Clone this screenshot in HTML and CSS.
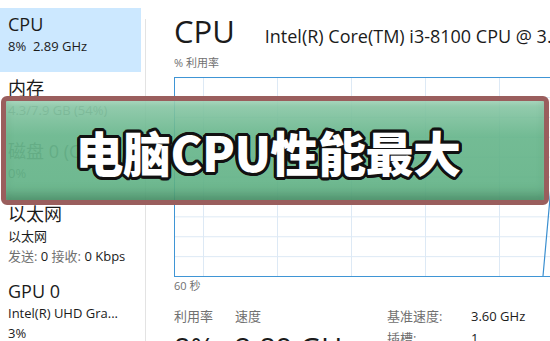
FILE: index.html
```html
<!DOCTYPE html>
<html lang="zh-CN">
<head>
<meta charset="utf-8">
<link rel="stylesheet" href="styles.css">
</head>
<body>
<div class="app">
  <aside class="sidebar">
    <div class="item selected">
      <div class="title">CPU</div>
      <div class="sub">8%&nbsp; 2.89 GHz</div>
    </div>
    <div class="item">
      <div class="title">内存</div>
      <div class="sub muted">4.3/7.9 GB (54%)</div>
    </div>
    <div class="item">
      <div class="title muted">磁盘 0 (C:)</div>
      <div class="sub muted">0%</div>
    </div>
    <div class="item tall">
      <div class="title">以太网</div>
      <div class="sub">以太网</div>
      <div class="sub"><span class="muted">发送:</span> 0 <span class="muted">接收:</span> 0 Kbps</div>
    </div>
    <div class="item tall">
      <div class="title">GPU 0</div>
      <div class="sub">Intel(R) UHD Gra...</div>
      <div class="sub">3%</div>
    </div>
  </aside>
  <div class="divider"></div>
  <main class="main">
    <div class="header">
      <span class="big">CPU</span>
      <span class="model">Intel(R) Core(TM) i3-8100 CPU @ 3.60GHz</span>
    </div>
    <div class="axis">% 利用率</div>
    <div class="graph">
      <svg class="trace" width="400" height="199" viewBox="0 0 400 199">
        <polyline points="368,198 375,120 380,60" fill="none" stroke="#3b8fd0" stroke-width="1.2"/>
      </svg>
    </div>
    <div class="axis time">60 秒</div>
    <div class="stats">
      <div class="stat">
        <div class="label">利用率</div>
        <div class="value">8%</div>
      </div>
      <div class="stat">
        <div class="label">速度</div>
        <div class="value">2.89 GHz</div>
      </div>
      <div class="specs">
        <span class="label">基准速度:</span><span class="spec">3.60 GHz</span>
        <span class="label">插槽:</span><span class="spec">1</span>
      </div>
    </div>
  </main>
</div>
<div class="banner">
  <span class="banner-text">电脑CPU性能最大</span>
</div>
</body>
</html>
```
FILE: styles.css
```css
html, body {
  margin: 0;
  padding: 0;
  background: #ffffff;
  overflow: hidden;
}
body {
  width: 550px;
  height: 341px;
  position: relative;
  font-family: "Open Sans", "Noto Sans CJK SC", sans-serif;
  color: #1b1b1b;
}
.app {
  display: flex;
  height: 341px;
}
.sidebar {
  width: 145px;
  padding-top: 8px;
  flex: none;
}
.item {
  width: 141px;
  box-sizing: border-box;
  padding: 5px 8px 0 8px;
  height: 63px;
}
.item.tall {
  height: 77px;
}
.item.selected {
  background: #cce8ff;
  height: 64px;
}
.title {
  font-size: 18px;
  line-height: 23px;
  white-space: nowrap;
}
.sub {
  font-size: 13px;
  line-height: 20px;
  white-space: nowrap;
}
.muted {
  color: #707070;
}
.divider {
  width: 1px;
  background: #e3e3e3;
  margin-top: 19px;
  flex: none;
}
.main {
  flex: 1;
  padding-left: 28px;
  padding-top: 11px;
  overflow: hidden;
  min-width: 0;
}
.header {
  display: flex;
  align-items: baseline;
  gap: 30px;
  white-space: nowrap;
}
.big {
  font-size: 31px;
  line-height: 40px;
}
.model {
  font-size: 18px;
}
.axis {
  font-size: 11px;
  color: #707070;
  line-height: 16px;
  margin-top: 4px;
}
.graph {
  margin-top: 6px;
  width: 420px;
  height: 198px;
  border: 1px solid #3f95d5;
  border-right: none;
  position: relative;
  background-image:
    linear-gradient(to right, #dde9f5 1px, transparent 1px),
    linear-gradient(to bottom, #dde9f5 1px, transparent 1px);
  background-size: 74px 100%, 100% 19.9px;
  background-position: 28px 0, 0 19px;
}
.trace {
  position: absolute;
  left: 0;
  top: 0;
}
.time {
  margin-top: 1px;
}
.stats {
  display: flex;
  margin-top: 13px;
  white-space: nowrap;
}
.stat {
  width: 61px;
}
.stat + .stat {
  width: 152px;
}
.label {
  font-size: 13px;
  line-height: 18px;
  color: #707070;
}
.value {
  font-size: 29px;
  line-height: 32px;
  margin-top: 7px;
}
.specs {
  display: grid;
  grid-template-columns: 84px auto;
  row-gap: 4px;
  align-content: start;
}
.spec {
  font-size: 13px;
  line-height: 18px;
}
.banner {
  position: absolute;
  left: 1px;
  top: 96px;
  width: 548px;
  height: 109px;
  box-sizing: border-box;
  border: 5px solid #9a5e5d;
  border-radius: 6px;
  background: linear-gradient(to bottom, rgba(140,200,168,0.9) 0%, rgba(100,180,137,0.9) 35%, rgba(94,176,131,0.9) 100%);
  box-shadow: inset 0 -10px 12px -5px rgba(30,80,50,0.4), inset 0 3px 4px rgba(255,255,255,0.15);
  display: flex;
  align-items: center;
  justify-content: center;
  padding-right: 14px;
}
.banner-text {
  font-family: "Noto Sans CJK SC", sans-serif;
  font-weight: 900;
  font-size: 48px;
  line-height: 54px;
  color: #ffffff;
  letter-spacing: -0.5px;
  text-shadow:
    -3px 0 0 #111, 3px 0 0 #111, 0 -3px 0 #111, 0 3px 0 #111,
    -2px -2px 0 #111, 2px -2px 0 #111, -2px 2px 0 #111, 2px 2px 0 #111,
    -3px 1px 0 #111, 3px 1px 0 #111, -1px 3px 0 #111, 1px 3px 0 #111,
    -3px -1px 0 #111, 3px -1px 0 #111, -1px -3px 0 #111, 1px -3px 0 #111;
}
```
